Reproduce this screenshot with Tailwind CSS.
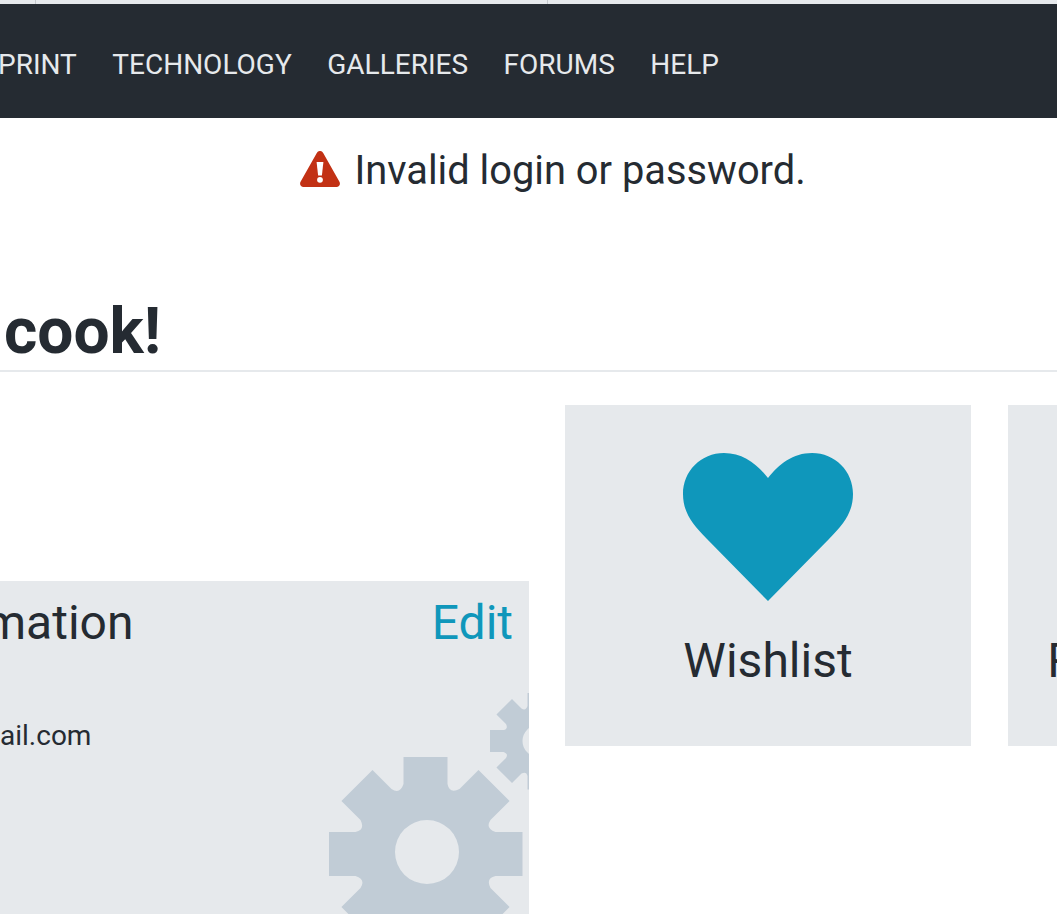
<!doctype html>
<html lang="en">
<head>
<meta charset="utf-8">
<title>Account</title>
<script src="https://cdn.jsdelivr.net/npm/@tailwindcss/browser@4"></script>
</head>
<body class="font-['Roboto',sans-serif] bg-white text-[#252b32]">
<div class="w-[1057px] h-[914px] overflow-hidden flex flex-col">
  <div class="h-1 shrink-0 bg-[#e6e9ec] flex">
    <div class="w-[36px] border-r border-[#c4c8cc]"></div>
    <div class="w-[512px] border-r border-[#c4c8cc]"></div>
  </div>
  <nav class="h-[114px] shrink-0 bg-[#252b32] flex items-center gap-[35.5px] pt-2 pl-[-1px] text-[28px] text-[#e6e9ec] whitespace-nowrap">
    <a class="ml-[-2px]">PRINT</a><a>TECHNOLOGY</a><a>GALLERIES</a><a>FORUMS</a><a>HELP</a>
  </nav>
  <div class="h-[105px] shrink-0 pl-[300px] pt-7 flex items-start gap-[14.5px] text-[39.8px] leading-[50px]">
    <svg class="w-[40px] h-[36px] mt-[5px] shrink-0" viewBox="0 0 40 36">
      <path fill="#c23114" d="M16.8 2 C18.3 -.7 21.7 -.7 23.2 2 L39.3 30.6 C40.9 33.4 39.2 36 36.5 36 L3.5 36 C.8 36 -.9 33.4 .7 30.6 Z"/>
      <path fill="#fff" d="M16.6 11 L23.4 11 L21.9 24.5 L18.1 24.5 Z"/>
      <circle cx="20" cy="28.8" r="2.9" fill="#fff"/>
    </svg>
    <span>Invalid login or password.</span>
  </div>
  <div class="h-[44px] shrink-0"></div>
  <div class="h-[105px] shrink-0 border-b-2 border-[#e6e9ec] pl-[4px] pt-[25px]">
    <h1 class="font-bold text-[64px] leading-[80px]">cook!</h1>
  </div>
  <div class="flex items-start pt-[33px] shrink-0">
    <section class="w-[529px] shrink-0 mt-[176px] h-[400px] bg-[#e6e9ec] relative overflow-hidden">
      <div class="flex justify-between items-center pr-4 pt-[15px] text-[48px] leading-[54px]">
        <span class="ml-[-16px]">mation</span>
        <a class="text-[#0f97bb]">Edit</a>
      </div>
      <p class="mt-[66px] text-[28px] leading-[40px]">ail.com</p>
      <svg class="absolute left-[329px] top-[112px] w-[200px] h-[288px]" viewBox="0 0 200 288" aria-hidden="true">
        <g fill="#c1ccd6" fill-rule="evenodd">
          <path transform="translate(96.5 161)" d="M-22 -97 L22 -97 L22 -70 Q24 -60 34 -65 L53 -84.1 L84.1 -53 L65 -33.9 Q59.4 -25.5 70 -22 L97 -22 L97 22 L70 22 Q60 24 65 34 L84.1 53 L53 84.1 L33.9 65 Q25.5 59.4 22 70 L22 97 L-22 97 L-22 70 Q-24 60 -34 65 L-53 84.1 L-84.1 53 L-65 33.9 Q-59.4 25.5 -70 22 L-97 22 L-97 -22 L-70 -22 Q-60 -24 -65 -34 L-84.1 -53 L-53 -84.1 L-34 -65 Q-25.5 -59.4 -22 -70 Z M33.5 -2 A32 32 0 1 0 -30.5 -2 A32 32 0 1 0 33.5 -2 Z"/>
          <path transform="translate(209.5 48) scale(.5)" d="M-22 -97 L22 -97 L22 -70 Q24 -60 34 -65 L53 -84.1 L84.1 -53 L65 -33.9 Q59.4 -25.5 70 -22 L97 -22 L97 22 L70 22 Q60 24 65 34 L84.1 53 L53 84.1 L33.9 65 Q25.5 59.4 22 70 L22 97 L-22 97 L-22 70 Q-24 60 -34 65 L-53 84.1 L-84.1 53 L-65 33.9 Q-59.4 25.5 -70 22 L-97 22 L-97 -22 L-70 -22 Q-60 -24 -65 -34 L-84.1 -53 L-53 -84.1 L-34 -65 Q-25.5 -59.4 -22 -70 Z M32 0 A32 32 0 1 0 -32 0 A32 32 0 1 0 32 0 Z"/>
        </g>
      </svg>
    </section>
    <a class="ml-9 w-[406px] h-[341px] shrink-0 bg-[#e6e9ec] flex flex-col items-center pt-12">
      <svg class="w-[170px] h-[148px]" viewBox="0 0 170 148">
        <path fill="#0f97bb" d="M85 148 L24 86 C8 70 0 58 0 41 C0 18 18 0 41 0 C60 0 74 11 85 25 C96 11 110 0 129 0 C152 0 170 18 170 41 C170 58 162 70 146 86 Z"/>
      </svg>
      <span class="mt-[33px] text-[48px] leading-[54px]">Wishlist</span>
    </a>
    <a class="ml-[37px] w-[406px] h-[341px] shrink-0 bg-[#e6e9ec] flex flex-col items-center pt-[229px] pl-2">
      <span class="text-[48px] leading-[54px] whitespace-nowrap">Recent Reviews</span>
    </a>
  </div>
</div>
</body>
</html>
